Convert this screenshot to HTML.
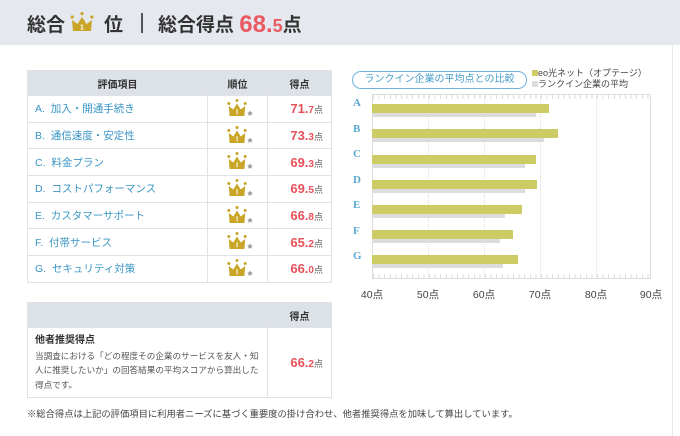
<!DOCTYPE html>
<html><head><meta charset="utf-8"><style>
*{margin:0;padding:0;box-sizing:border-box}
body{width:680px;height:436px;background:#fff;font-family:"Liberation Sans","Noto Sans CJK JP",sans-serif;position:relative;overflow:hidden;color:#333}
.a{position:absolute}
.hdr{left:0;top:0;width:680px;height:45px;background:#e5e8ee}
.ht{font-size:19px;font-weight:bold;color:#333;top:10px;white-space:nowrap}
table{border-collapse:collapse;position:absolute}
td,th{border:1px solid #dfe2e7}
th{background:#dde1e8;font-size:10px;font-weight:bold;color:#333;height:25px}
.lab{color:#3a96c4;font-size:10.5px;padding-left:7px;height:26.7px}
.sc{color:#e8505b;font-weight:bold;font-size:13px;text-align:right;padding-right:8px}
.sc small{font-size:10px}
.sc i{font-style:normal;font-weight:normal;color:#555;font-size:9px}
.yb{position:absolute;left:372px;height:9px;background:#cdcc64}
.gb{position:absolute;left:372px;height:4px;background:#dcdcdc}
.rl{position:absolute;left:353px;color:#5aa8cf;font-weight:bold;font-size:11px;font-family:"Liberation Serif",serif}
.xl{position:absolute;top:287px;font-size:10.5px;color:#444;width:40px;text-align:center}
</style></head><body>
<div class="a hdr"></div>
<div class="a ht" style="left:27px">総合</div>
<svg class="a" style="left:70px;top:10px" width="24" height="24" viewBox="0 0 24 20"><circle cx="2.2" cy="5" r="1.6" fill="#c9a628"/><circle cx="12" cy="1.6" r="1.6" fill="#c9a628"/><circle cx="21.8" cy="5" r="1.6" fill="#c9a628"/><path d="M2 8 L7.5 12 L12 5 L16.5 12 L22 8 L21 19 L3 19Z" fill="#c9a628"/><text x="12" y="17.5" font-size="7" font-weight="bold" fill="#fff" text-anchor="middle" font-family="Liberation Sans">1</text></svg>
<div class="a ht" style="left:104px">位</div>
<div class="a" style="left:141px;top:13px;width:2px;height:20px;background:#555"></div>
<div class="a ht" style="left:158px">総合得点 <span style="color:#ea5a62;font-size:24px;position:relative;top:1px">68.<span style="font-size:18px">5</span></span>点</div>

<table style="left:27px;top:70px;width:305px">
<tr><th style="width:180px">評価項目</th><th style="width:60px">順位</th><th>得点</th></tr>
<tr><td class="lab">A.&nbsp; 加入・開通手続き</td><td class="cr"></td><td class="sc">71.<small>7</small><i>点</i></td></tr>
<tr><td class="lab">B.&nbsp; 通信速度・安定性</td><td class="cr"></td><td class="sc">73.<small>3</small><i>点</i></td></tr>
<tr><td class="lab">C.&nbsp; 料金プラン</td><td class="cr"></td><td class="sc">69.<small>3</small><i>点</i></td></tr>
<tr><td class="lab">D.&nbsp; コストパフォーマンス</td><td class="cr"></td><td class="sc">69.<small>5</small><i>点</i></td></tr>
<tr><td class="lab">E.&nbsp; カスタマーサポート</td><td class="cr"></td><td class="sc">66.<small>8</small><i>点</i></td></tr>
<tr><td class="lab">F.&nbsp; 付帯サービス</td><td class="cr"></td><td class="sc">65.<small>2</small><i>点</i></td></tr>
<tr><td class="lab">G.&nbsp; セキュリティ対策</td><td class="cr"></td><td class="sc">66.<small>0</small><i>点</i></td></tr>
</table>

<table style="left:27px;top:302px;width:305px">
<tr><th style="width:240px"></th><th>得点</th></tr>
<tr><td style="height:68px;padding:5px 7px;font-size:8.6px;line-height:14.5px;color:#555;vertical-align:top"><b style="color:#333;font-size:10px">他者推奨得点</b><br>当調査における「どの程度その企業のサービスを友人・知人に推奨したいか」の回答結果の平均スコアから算出した得点です。</td><td class="sc">66.<small>2</small><i>点</i></td></tr>
</table>
<div class="a" style="left:27px;top:406px;font-size:9.3px;color:#444;white-space:nowrap">※総合得点は上記の評価項目に利用者ニーズに基づく重要度の掛け合わせ、他者推奨得点を加味して算出しています。</div>

<div class="a" style="left:352px;top:71px;width:175px;height:18px;border:1.5px solid #6db4d8;border-radius:10px;font-size:10px;color:#4aa0cc;text-align:center;line-height:15px">ランクイン企業の平均点との比較</div>
<div class="a" style="left:532px;top:68px;font-size:9px;color:#444;line-height:11px"><span style="display:inline-block;width:6px;height:6px;background:#cdcc64"></span>eo光ネット（オプテージ）<br><span style="display:inline-block;width:6px;height:6px;background:#ddd"></span>ランクイン企業の平均</div>
<div class="a" style="left:672px;top:45px;width:1px;height:391px;background:#e8e8e8"></div>
<div class="a" style="left:372px;top:94px;width:279px;height:185px;border:1px solid #ddd"></div>
<div class="a" style="left:428px;top:94px;height:185px;border-left:1px dotted #ddd"></div>
<div class="a" style="left:484px;top:94px;height:185px;border-left:1px dotted #ddd"></div>
<div class="a" style="left:540px;top:94px;height:185px;border-left:1px dotted #ddd"></div>
<div class="a" style="left:596px;top:94px;height:185px;border-left:1px dotted #ddd"></div>
<div class="a" style="left:373px;top:95px;width:277px;height:4px;background:repeating-linear-gradient(90deg,#ddd 0 1px,transparent 1px 5.6px)"></div>
<div class="a" style="left:373px;top:274px;width:277px;height:4px;background:repeating-linear-gradient(90deg,#ddd 0 1px,transparent 1px 5.6px)"></div>

<div class="rl" style="top:97px">A</div><div class="yb" style="top:104px;width:177px"></div><div class="gb" style="top:113px;width:164px"></div>
<div class="rl" style="top:123px">B</div><div class="yb" style="top:129px;width:186px"></div><div class="gb" style="top:138px;width:172px"></div>
<div class="rl" style="top:148px">C</div><div class="yb" style="top:155px;width:164px"></div><div class="gb" style="top:164px;width:153px"></div>
<div class="rl" style="top:174px">D</div><div class="yb" style="top:180px;width:165px"></div><div class="gb" style="top:189px;width:153px"></div>
<div class="rl" style="top:199px">E</div><div class="yb" style="top:205px;width:150px"></div><div class="gb" style="top:214px;width:133px"></div>
<div class="rl" style="top:225px">F</div><div class="yb" style="top:230px;width:141px"></div><div class="gb" style="top:239px;width:128px"></div>
<div class="rl" style="top:250px">G</div><div class="yb" style="top:255px;width:146px"></div><div class="gb" style="top:264px;width:131px"></div>

<div class="xl" style="left:352px">40点</div><div class="xl" style="left:408px">50点</div><div class="xl" style="left:464px">60点</div><div class="xl" style="left:520px">70点</div><div class="xl" style="left:576px">80点</div><div class="xl" style="left:631px">90点</div>

<svg class="a" style="left:0;top:0" width="680" height="436">
<defs><g id="cr"><circle cx="1.8" cy="4.5" r="1.5" fill="#c9a628"/><circle cx="10" cy="1.5" r="1.5" fill="#c9a628"/><circle cx="18.2" cy="4.5" r="1.5" fill="#c9a628"/><path d="M1.8 7 L6.3 10.5 L10 4.5 L13.7 10.5 L18.2 7 L17.4 17 L2.6 17Z" fill="#c9a628"/><path d="M9.3 10.5 L10.6 10 L10.6 15.5 L9.6 15.5 L9.6 11.3 Z" fill="#fff"/><path d="M23 11.5 l0.9 1.8 1.9 0.2 -1.4 1.3 0.4 1.9 -1.8-1 -1.8 1 0.4-1.9 -1.4-1.3 1.9-0.2z" fill="#999"/></g></defs>
<use href="#cr" x="227" y="99"/><use href="#cr" x="227" y="126"/><use href="#cr" x="227" y="152"/><use href="#cr" x="227" y="179"/><use href="#cr" x="227" y="206"/><use href="#cr" x="227" y="232"/><use href="#cr" x="227" y="259"/>
</svg>
</body></html>
